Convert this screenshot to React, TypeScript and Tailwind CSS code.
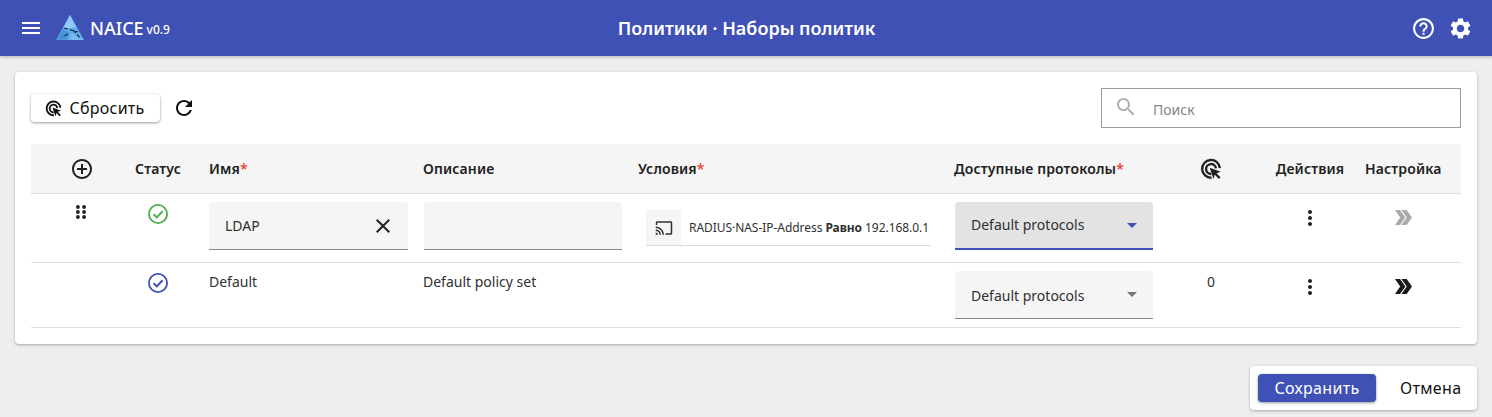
import React from 'react';

const FONT = "font-['Noto_Sans',sans-serif]";
const ROW = 'grid grid-cols-[100px_54px_238px_215px_316px_214px_86px_111px_96px]';

const Icon: React.FC<{ d: string; className?: string }> = ({ d, className }) => (
  <svg viewBox="0 0 24 24" fill="currentColor" className={className}>
    <path d={d} />
  </svg>
);

const paths = {
  menu: 'M3 18h18v-2H3v2zm0-5h18v-2H3v2zm0-7v2h18V6H3z',
  help: 'M11 18h2v-2h-2v2zm1-16C6.48 2 2 6.48 2 12s4.48 10 10 10 10-4.48 10-10S17.52 2 12 2zm0 18c-4.41 0-8-3.59-8-8s3.59-8 8-8 8 3.59 8 8-3.59 8-8 8zm0-14c-2.21 0-4 1.79-4 4h2c0-1.1.9-2 2-2s2 .9 2 2c0 2-3 1.75-3 5h2c0-2.25 3-2.5 3-5 0-2.21-1.79-4-4-4z',
  settings: 'M19.14 12.94c.04-.3.06-.61.06-.94 0-.32-.02-.64-.07-.94l2.03-1.58c.18-.14.23-.41.12-.61l-1.92-3.32c-.12-.22-.37-.29-.59-.22l-2.39.96c-.5-.38-1.03-.7-1.62-.94l-.36-2.54c-.04-.24-.24-.41-.48-.41h-3.84c-.24 0-.43.17-.47.41l-.36 2.54c-.59.24-1.13.57-1.62.94l-2.39-.96c-.22-.08-.47 0-.59.22L2.74 8.87c-.12.21-.08.47.12.61l2.03 1.58c-.05.3-.09.63-.09.94s.02.64.07.94l-2.03 1.58c-.18.14-.23.41-.12.61l1.92 3.32c.12.22.37.29.59.22l2.39-.96c.5.38 1.03.7 1.62.94l.36 2.54c.05.24.24.41.48.41h3.84c.24 0 .44-.17.47-.41l.36-2.54c.59-.24 1.13-.56 1.62-.94l2.39.96c.22.08.47 0 .59-.22l1.92-3.32c.12-.22.07-.47-.12-.61l-2.01-1.58zM12 15.6c-1.98 0-3.6-1.62-3.6-3.6s1.62-3.6 3.6-3.6 3.6 1.62 3.6 3.6-1.62 3.6-3.6 3.6z',
  refresh: 'M17.65 6.35C16.2 4.9 14.21 4 12 4c-4.42 0-7.99 3.58-7.99 8s3.57 8 7.99 8c3.73 0 6.84-2.55 7.73-6h-2.08c-.82 2.33-3.04 4-5.65 4-3.31 0-6-2.69-6-6s2.69-6 6-6c1.66 0 3.14.69 4.22 1.78L13 11h7V4l-2.35 2.35z',
  search: 'M15.5 14h-.79l-.28-.27C15.41 12.59 16 11.11 16 9.5 16 5.91 13.09 3 9.5 3S3 5.91 3 9.5 5.91 16 9.5 16c1.61 0 3.09-.59 4.23-1.57l.27.28v.79l5 4.99L20.49 19l-4.99-5zm-6 0C7.01 14 5 11.99 5 9.5S7.01 5 9.5 5 14 7.01 14 9.5 11.99 14 9.5 14z',
  add: 'M13 7h-2v4H7v2h4v4h2v-4h4v-2h-4V7zm-1-5C6.48 2 2 6.48 2 12s4.48 10 10 10 10-4.48 10-10S17.52 2 12 2zm0 18c-4.41 0-8-3.59-8-8s3.59-8 8-8 8 3.59 8 8-3.59 8-8 8z',
  close: 'M19 6.41L17.59 5 12 10.59 6.41 5 5 6.41 10.59 12 5 17.59 6.41 19 12 13.41 17.59 19 19 17.59 13.41 12z',
  cast: 'M21 3H3c-1.1 0-2 .9-2 2v3h2V5h18v14h-7v2h7c1.1 0 2-.9 2-2V5c0-1.1-.9-2-2-2zM1 18v3h3c0-1.66-1.34-3-3-3zm0-4v2c2.76 0 5 2.24 5 5h2c0-3.87-3.13-7-7-7zm0-4v2c4.97 0 9 4.03 9 9h2c0-6.08-4.93-11-11-11z',
  more: 'M12 8c1.1 0 2-.9 2-2s-.9-2-2-2-2 .9-2 2 .9 2 2 2zm0 2c-1.1 0-2 .9-2 2s.9 2 2 2 2-.9 2-2-.9-2-2-2zm0 6c-1.1 0-2 .9-2 2s.9 2 2 2 2-.9 2-2-.9-2-2-2z',
};

const HitCount: React.FC<{ className?: string }> = ({ className }) => (
  <svg viewBox="0 0 24 24" fill="none" stroke="currentColor" className={className}>
    <path d="M12.5 21.5A9.7 9.7 0 1 1 21.7 11" strokeWidth="2.6" />
    <path d="M12.3 17.4A5.4 5.4 0 1 1 17.4 11.4" strokeWidth="2.6" />
    <path d="M10.6 10.6l12 4.4-4.6 1.6 4.4 4.4-1.8 1.8-4.4-4.4-1.6 4.6z" fill="currentColor" stroke="none" />
  </svg>
);

const Check: React.FC<{ className?: string }> = ({ className }) => (
  <svg viewBox="0 0 20 20" fill="none" stroke="currentColor" className={className}>
    <circle cx="10" cy="10" r="9.1" strokeWidth="1.8" />
    <path d="M5.6 10.2l3.2 3.2 5.8-6.2" strokeWidth="2" />
  </svg>
);

const Chevrons: React.FC<{ className?: string }> = ({ className }) => (
  <svg viewBox="0 0 17 15" fill="currentColor" className={className}>
    <path d="M0 0h5l5.4 7.5L5 15H0l5.2-7.5z" />
    <path d="M6.4 0H11.6L17 7.5 11.6 15H6.4l5.4-7.5z" />
  </svg>
);

const Dots: React.FC = () => (
  <svg viewBox="0 0 10 14" fill="#212121" className="w-[10px] h-[14px]">
    {[2, 7, 12].map((y) => (
      <React.Fragment key={y}>
        <circle cx="1.9" cy={y} r="1.9" />
        <circle cx="8.1" cy={y} r="1.9" />
      </React.Fragment>
    ))}
  </svg>
);

const Logo: React.FC = () => (
  <svg viewBox="0 0 28 26" className="w-[28px] h-[26px]">
    <polygon points="14,0 0,25 28,25" fill="#64b0ee" />
    <polygon points="14,0 7,14 20,12" fill="#90caf9" />
    <polygon points="0,25 7,14 14,18 11,25" fill="#4a94d8" />
    <polygon points="14,18 28,25 16,25" fill="#7cbcf2" />
    <path d="M8 13L22 17M17 15L25 24M12 19L6 22" stroke="#0d2a57" strokeWidth="1.2" fill="none" strokeDasharray="4 2" />
  </svg>
);

const Required: React.FC<{ children: React.ReactNode }> = ({ children }) => (
  <span>
    {children}
    <span className="text-[#f44336]">*</span>
  </span>
);

const ProtocolSelect: React.FC<{ focused?: boolean }> = ({ focused }) => (
  <div
    className={`ml-px w-[198px] h-[48px] rounded-t flex items-center justify-between pl-4 pr-4 text-sm text-[#303030] ${
      focused ? 'bg-[#e3e3e3] border-b-2 border-[#3f51b5]' : 'bg-[#f5f5f5] border-b border-[#8c8c8c]'
    }`}
  >
    <span className={focused ? '' : 'pt-[2px]'}>Default protocols</span>
    <span
      className={`w-0 h-0 border-l-[5px] border-r-[5px] border-t-[5px] border-l-transparent border-r-transparent ${
        focused ? 'border-t-[#3f51b5]' : 'border-t-[#757575]'
      }`}
    />
  </div>
);

const App: React.FC = () => {
  return (
    <div className={`${FONT} h-[417px] overflow-hidden bg-[#eeeeee] text-[#212121] flex flex-col`}>
      <header className="h-[56px] shrink-0 bg-[#3f51b5] text-white flex items-center justify-between pl-5 pr-[19px] shadow-[0_1px_3px_rgba(0,0,0,0.25)]">
        <div className="w-[300px] flex items-center">
          <Icon d={paths.menu} className="w-6 h-6 -ml-[1px]" />
          <div className="ml-[13px]"><Logo /></div>
          <span className="ml-[6px] text-[18px] font-medium leading-none">NAICE</span>
          <span className="ml-[3px] mt-[3px] text-[12px] font-medium leading-none">v0.9</span>
        </div>
        <div className="text-[18px] font-semibold">Политики · Наборы политик</div>
        <div className="w-[300px] flex items-center justify-end gap-[12px]">
          <Icon d={paths.help} className="w-[25px] h-[25px]" />
          <Icon d={paths.settings} className="w-[25px] h-[25px]" />
        </div>
      </header>

      <main className="mt-4 mx-[15px] h-[272px] bg-white rounded shadow-[0_1px_3px_rgba(0,0,0,0.3)] px-4 pt-4">
        <div className="flex items-center justify-between h-[40px]">
          <div className="flex items-center">
            <button className="w-[129px] h-[28px] pr-[2px] rounded bg-white shadow-[0_1px_3px_rgba(0,0,0,0.4)] flex items-center justify-center gap-[8px] text-[16px] tracking-[0.015em] text-[#111111]">
              <HitCount className="w-[17px] h-[17px]" />
              Сбросить
            </button>
            <Icon d={paths.refresh} className="ml-[12px] w-6 h-6 text-[#111111]" />
          </div>
          <div className="w-[360px] h-[40px] border border-[#9e9e9e] flex items-center pl-[12px] text-sm text-[#858585]">
            <Icon d={paths.search} className="w-6 h-6 -mt-[2px] text-[#b0b0b0]" />
            <span className="ml-[15px] pt-[4px]">Поиск</span>
          </div>
        </div>

        <div className="mt-4 text-sm">
          <div className={`${ROW} h-[50px] items-center bg-[#f5f5f5] border-b border-[#dddddd] font-semibold tracking-[0.01em]`}>
            <div className="flex justify-center pl-px">
              <Icon d={paths.add} className="w-6 h-6" />
            </div>
            <div className="text-center">Статус</div>
            <div className="pl-6"><Required>Имя</Required></div>
            <div>Описание</div>
            <div><Required>Условия</Required></div>
            <div><Required>Доступные протоколы</Required></div>
            <div className="flex justify-center">
              <HitCount className="w-[22px] h-[22px]" />
            </div>
            <div className="text-center pl-px">Действия</div>
            <div className="text-center pr-5">Настройка</div>
          </div>

          <div className={`${ROW} h-[69px] border-b border-[#e0e0e0] pt-2`}>
            <div className="flex justify-center pt-[3px]"><Dots /></div>
            <div className="flex justify-center pt-[2px]">
              <Check className="w-5 h-5 text-[#4caf50]" />
            </div>
            <div className="pl-6">
              <div className="w-[199px] h-[48px] rounded-t bg-[#f5f5f5] border-b border-[#8c8c8c] flex items-center justify-between pl-4 pr-[13px] text-[#303030]">
                <span>LDAP</span>
                <Icon d={paths.close} className="w-6 h-6 text-[#212121]" />
              </div>
            </div>
            <div>
              <div className="ml-px w-[198px] h-[48px] rounded-t bg-[#f5f5f5] border-b border-[#8c8c8c]" />
            </div>
            <div className="pl-2">
              <div className="w-[285px] h-[36px] mt-[8px] border-b border-[#dddddd] flex items-center">
                <div className="w-[35px] h-full bg-[#f5f5f5] flex items-center justify-center">
                  <Icon d={paths.cast} className="w-[18px] h-[18px] text-[#303030]" />
                </div>
                <span className="ml-2 text-[12px] tracking-[-0.05px] text-[#303030] whitespace-nowrap">
                  RADIUS·NAS-IP-Address <b className="font-bold">Равно</b> 192.168.0.1
                </span>
              </div>
            </div>
            <div><ProtocolSelect focused /></div>
            <div />
            <div className="flex justify-center pt-[4px] pl-px">
              <Icon d={paths.more} className="w-6 h-6" />
            </div>
            <div className="flex justify-center pr-5 pt-[8px]">
              <Chevrons className="w-[17px] h-[15px] text-[#aaaaaa]" />
            </div>
          </div>

          <div className={`${ROW} h-[65px] border-b border-[#e0e0e0] pt-2`}>
            <div />
            <div className="flex justify-center pt-[2px]">
              <Check className="w-5 h-5 text-[#3f51b5]" />
            </div>
            <div className="pl-6 pt-[1px] text-[#303030]">Default</div>
            <div className="pt-[1px] text-[#303030]">Default policy set</div>
            <div />
            <div><ProtocolSelect /></div>
            <div className="text-center pt-[1px] text-[#303030]">0</div>
            <div className="flex justify-center pt-[4px] pl-px">
              <Icon d={paths.more} className="w-6 h-6" />
            </div>
            <div className="flex justify-center pr-5 pt-[8px]">
              <Chevrons className="w-[17px] h-[15px] text-[#1a1a1a]" />
            </div>
          </div>
        </div>
      </main>

      <div className="mt-[22px] mr-[15px] self-end w-[227px] h-[44px] bg-white rounded shadow-[0_1px_3px_rgba(0,0,0,0.3)] flex items-center pl-2 text-[16px] tracking-[0.02em]">
        <button className="w-[118px] h-[28px] rounded bg-[#3f51b5] text-white shadow-[0_1px_3px_rgba(0,0,0,0.4)]">Сохранить</button>
        <button className="ml-6 text-[#111111]">Отмена</button>
      </div>
    </div>
  );
};

export default App;
